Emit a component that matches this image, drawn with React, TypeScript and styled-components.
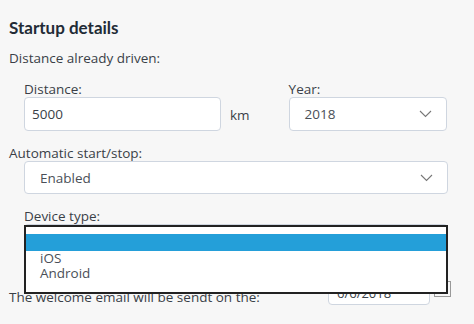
import React from "react";
import styled, { createGlobalStyle } from "styled-components";

const Global = createGlobalStyle`
  html, body { margin: 0; padding: 0; background: #f7f7f7; }
  body { font-family: "Open Sans", Lato, sans-serif; color: #3a3f47; }
`;

const Page = styled.div`
  position: relative;
  width: 474px;
  height: 324px;
  overflow: hidden;
  padding: 17px 0 0 9px;
  box-sizing: border-box;
`;

const Heading = styled.h3`
  margin: 0 0 11px;
  font-family: Lato, sans-serif;
  font-size: 17px;
  font-weight: 700;
  color: #222b36;
  line-height: 22px;
`;

const Label = styled.div<{ $indent?: boolean }>`
  font-size: 13.5px;
  line-height: 16px;
  margin-left: ${(p) => (p.$indent ? "15px" : "0")};
`;

const Row = styled.div`
  display: flex;
  align-items: flex-end;
  margin: 15px 0 0 15px;
`;

const Field = styled.div`
  display: flex;
  flex-direction: column;
`;

const Input = styled.div<{ $w: number }>`
  width: ${(p) => p.$w}px;
  height: 34px;
  box-sizing: border-box;
  border: 1px solid #cfd6e0;
  border-radius: 4px;
  background: #fff;
  display: flex;
  align-items: center;
  padding: 0 7px;
  font-size: 13.5px;
`;

const Unit = styled.span`
  font-size: 13.5px;
  margin: 0 39px 7px 9px;
`;

const Select = styled.div<{ $w: number; $h?: number }>`
  width: ${(p) => p.$w}px;
  height: ${(p) => p.$h ?? 34}px;
  box-sizing: border-box;
  border: 1px solid #cfd6e0;
  border-radius: 4px;
  background: #fff;
  display: flex;
  align-items: center;
  justify-content: space-between;
  padding: 0 14px 0 15px;
  font-size: 13.5px;
  color: #4a4f57;
`;

const Block = styled.div<{ $top: number }>`
  margin-top: ${(p) => p.$top}px;
`;

const Indented = styled.div`
  margin-left: 15px;
`;

const EmailRow = styled.div`
  display: flex;
  align-items: flex-start;
  margin-top: 23px;
`;

const EmailText = styled.span`
  font-size: 13.5px;
  line-height: 16px;
  width: 319px;
  margin-top: 9px;
`;

const DateInput = styled.div`
  width: 102px;
  height: 25px;
  box-sizing: border-box;
  border: 1px solid #cfd6e0;
  border-radius: 4px;
  background: #fff;
  font-size: 13px;
  padding: 3px 8px;
`;

const CalBox = styled.div`
  width: 17px;
  height: 16px;
  box-sizing: border-box;
  border: 1px solid #999;
  background: #f7f7f7;
  margin: 1px 0 0 4px;
`;

const ListBox = styled.div`
  position: absolute;
  left: 24px;
  top: 225px;
  width: 424px;
  height: 69px;
  box-sizing: border-box;
  border: 2px solid #222;
  background: #fff;
  padding-top: 7px;
`;

const Option = styled.div<{ $active?: boolean }>`
  height: ${(p) => (p.$active ? 17 : 15)}px;
  line-height: 15px;
  padding-left: 14px;
  font-size: 13.5px;
  color: #4a4f57;
  background: ${(p) => (p.$active ? "#249fd9" : "transparent")};
`;

const Chevron = () => (
  <svg width="13" height="8" viewBox="0 0 13 8">
    <path d="M1 1l5.5 5.5L12 1" fill="none" stroke="#777" strokeWidth="1.1" />
  </svg>
);

export default function App() {
  return (
    <Page>
      <Global />
      <Heading>Startup details</Heading>
      <Label>Distance already driven:</Label>
      <Row>
        <Field>
          <Label>Distance:</Label>
          <Input $w={197}>5000</Input>
        </Field>
        <Unit>km</Unit>
        <Field>
          <Label>Year:</Label>
          <Select $w={158}>
            2018
            <Chevron />
          </Select>
        </Field>
      </Row>
      <Block $top={14}>
        <Label>Automatic start/stop:</Label>
        <Indented>
          <Select $w={424} $h={33}>
            Enabled
            <Chevron />
          </Select>
        </Indented>
      </Block>
      <Block $top={14}>
        <Label $indent>Device type:</Label>
        <Indented>
          <Select $w={424} $h={33}>
            <span />
            <Chevron />
          </Select>
        </Indented>
      </Block>
      <EmailRow>
        <EmailText>The welcome email will be sendt on the:</EmailText>
        <DateInput>6/6/2018</DateInput>
        <CalBox />
      </EmailRow>
      <ListBox>
        <Option $active>&nbsp;</Option>
        <Option>iOS</Option>
        <Option>Android</Option>
      </ListBox>
    </Page>
  );
}
